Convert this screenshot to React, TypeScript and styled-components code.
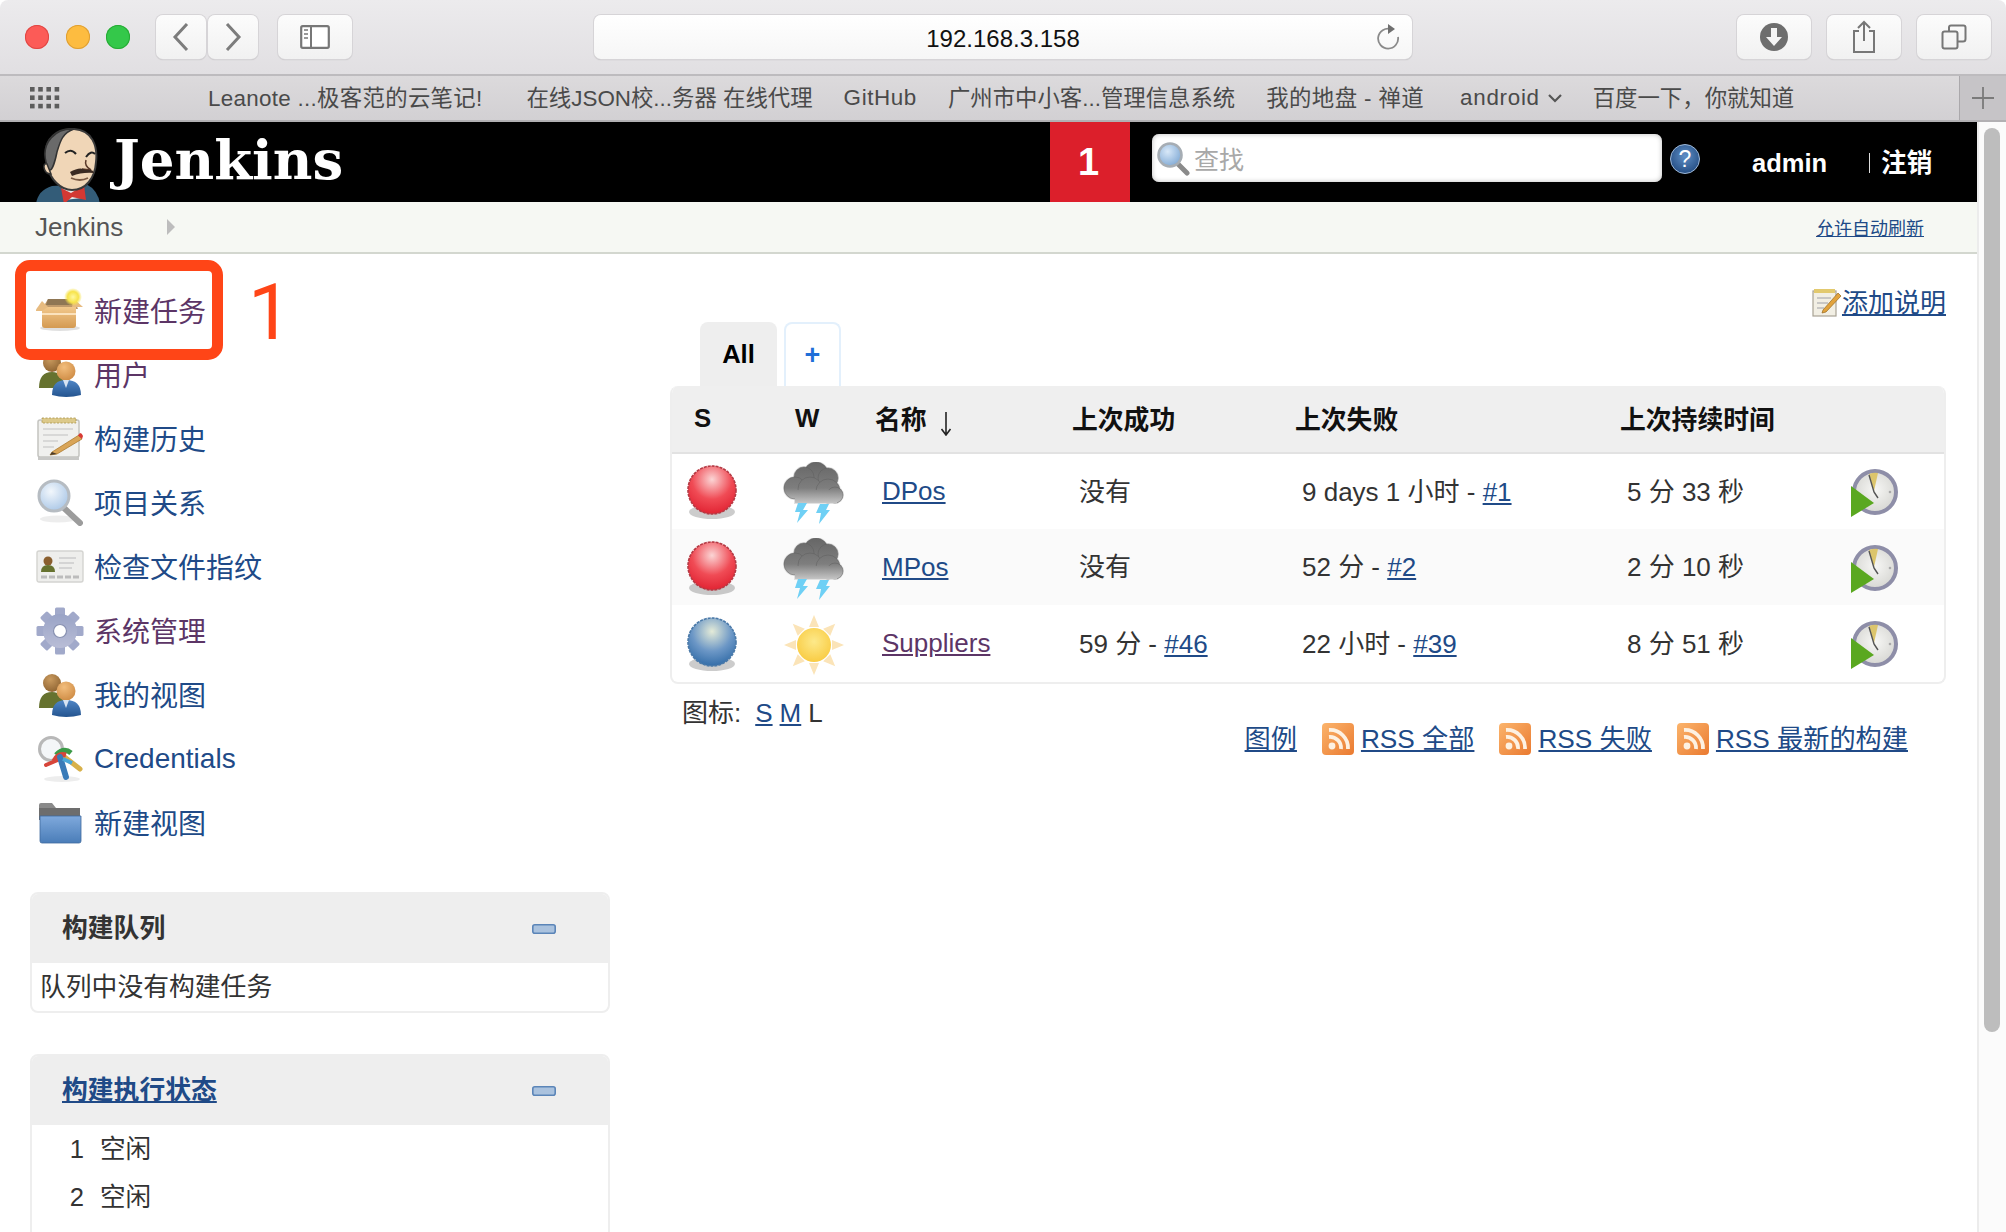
import styled, { createGlobalStyle } from "styled-components";

const GlobalStyle = createGlobalStyle`
  html, body {
    margin: 0;
    padding: 0;
    height: 100%;
    overflow: hidden;
    background: #fff;
  }
  body {
    font-family: "Liberation Sans", "Noto Sans CJK SC", sans-serif;
    font-size: 26px;
    color: #333;
  }
  a {
    color: #204a87;
  }
`;

const BLUE = "#204a87";
const PURPLE = "#5c3566";

/* ---------- icons ---------- */

function BackIcon() {
  return (
    <svg width="18" height="30" viewBox="0 0 18 30">
      <path d="M15 2 L3 15 L15 28" fill="none" stroke="#7c7c7c" strokeWidth="3" />
    </svg>
  );
}

function ForwardIcon() {
  return (
    <svg width="18" height="30" viewBox="0 0 18 30">
      <path d="M3 2 L15 15 L3 28" fill="none" stroke="#7c7c7c" strokeWidth="3" />
    </svg>
  );
}

function SidebarIcon() {
  return (
    <svg width="30" height="24" viewBox="0 0 30 24">
      <rect x="1.2" y="1.2" width="27.6" height="21.6" rx="1.5" fill="#fff" stroke="#777" strokeWidth="2.2" />
      <path d="M11 1 V23" stroke="#777" strokeWidth="2" />
      <path d="M4 5 H8 M4 9 H8 M4 13 H8" stroke="#999" strokeWidth="2" />
    </svg>
  );
}

function ReloadIcon() {
  return (
    <svg width="24" height="28" viewBox="0 0 24 28">
      <path d="M14 5 A10 10 0 1 0 21 13" fill="none" stroke="#8a8a8a" strokeWidth="1.8" />
      <path d="M11 0 L18 5 L11 10 Z" fill="#6f6f6f" />
    </svg>
  );
}

function DownloadIcon() {
  return (
    <svg width="30" height="30" viewBox="0 0 30 30">
      <circle cx="15" cy="15" r="14" fill="#6e6e6e" />
      <path d="M12 6 H18 V15 H23 L15 24 L7 15 H12 Z" fill="#f4f4f4" />
    </svg>
  );
}

function ShareIcon() {
  return (
    <svg width="24" height="34" viewBox="0 0 24 34">
      <path d="M7 11 H2 V32 H22 V11 H17" fill="none" stroke="#777" strokeWidth="2" />
      <path d="M12 2 V21 M6 8 L12 2 L18 8" fill="none" stroke="#777" strokeWidth="2" />
    </svg>
  );
}

function TabsIcon() {
  return (
    <svg width="26" height="26" viewBox="0 0 26 26">
      <rect x="1.5" y="7.5" width="15" height="17" rx="2" fill="none" stroke="#777" strokeWidth="2" />
      <path d="M8 7 V3.5 Q8 1.5 10 1.5 H22.5 Q24.5 1.5 24.5 3.5 V15 Q24.5 17.5 22 17.5 H17" fill="none" stroke="#777" strokeWidth="2" />
    </svg>
  );
}

function AppsIcon() {
  const dots = [];
  for (let r = 0; r < 3; r++) {
    for (let c = 0; c < 4; c++) {
      dots.push(<rect key={`${r}-${c}`} x={c * 8.2} y={r * 8.4} width="4.6" height="4.6" fill="#5c5c5c" />);
    }
  }
  return (
    <svg width="30" height="22" viewBox="0 0 30 22">
      {dots}
    </svg>
  );
}

function Mascot() {
  return (
    <svg width="68" height="76" viewBox="0 0 68 76">
      <path d="M0 76 Q2 62 16 58 L50 56 Q62 62 64 76 Z" fill="#335c78" />
      <path d="M26 58 L44 56 L46 70 L28 72 Z" fill="#e8e8e8" />
      <path d="M25 60 L35 65 L48 57 L50 72 L36 69 L28 76 Z" fill="#d33833" />
      <path d="M10 30 C7 10 22 0 38 1 C56 2 62 18 60 34 C59 50 50 62 36 62 C24 62 14 50 12 40 Z" fill="#f0d6b7" stroke="#3a3a3a" strokeWidth="2" />
      <path d="M10 34 C5 14 20 0 38 1 C26 5 24 14 21 24 C19 34 16 42 14 42 C11 42 11 38 10 34 Z" fill="#6a6a6a" stroke="#333" strokeWidth="1.5" />
      <path d="M11 36 C6 34 7 46 15 46 Z" fill="#f0d6b7" stroke="#333" strokeWidth="1.5" />
      <path d="M29 25 Q35 20 40 26 M50 29 Q55 22 59 26" fill="none" stroke="#222" strokeWidth="2" />
      <path d="M50 32 Q48 38 55 42 L46 41" fill="none" stroke="#5a3a2a" strokeWidth="1.5" />
      <path d="M34 44 Q44 38 50 42 Q57 41 58 45 Q46 44 36 48 Z" fill="#3a2a22" />
      <path d="M35 50 Q44 54 52 50" fill="none" stroke="#7a5a44" strokeWidth="1.8" />
    </svg>
  );
}

function NewItemIcon() {
  return (
    <svg width="48" height="48" viewBox="0 0 48 48">
      <defs>
        <linearGradient id="boxFront" x1="0" y1="0" x2="0" y2="1">
          <stop offset="0" stopColor="#f2c88c" />
          <stop offset="1" stopColor="#d49a52" />
        </linearGradient>
        <radialGradient id="starGlow">
          <stop offset="0" stopColor="#fff8a0" />
          <stop offset="0.6" stopColor="#f7e34a" />
          <stop offset="1" stopColor="#f7e34a" stopOpacity="0" />
        </radialGradient>
      </defs>
      <ellipse cx="24" cy="41" rx="20" ry="3" fill="#000" opacity="0.12" />
      <path d="M6 22 L12 12 L38 12 L42 22 Z" fill="#bf9a6c" />
      <path d="M12 12 L34 12 L36 18 L10 18 Z" fill="#8f7654" />
      <path d="M6 20 H40 V38 Q40 41 37 41 H9 Q6 41 6 38 Z" fill="url(#boxFront)" />
      <path d="M-1 24 L6 14 L12 20 L6 24 Z" fill="#e7bb80" />
      <path d="M47 20 L38 12 L36 20 Z" fill="#e7bb80" />
      <path d="M6 27 H40" stroke="#fbe2bd" strokeWidth="2" />
      <circle cx="37" cy="10" r="9" fill="url(#starGlow)" />
    </svg>
  );
}

function PeopleIcon() {
  return (
    <svg width="48" height="48" viewBox="0 0 48 48">
      <defs>
        <radialGradient id="headBack" cx="0.4" cy="0.3" r="0.8">
          <stop offset="0" stopColor="#c99a5e" />
          <stop offset="1" stopColor="#8a5f2e" />
        </radialGradient>
        <radialGradient id="headFront" cx="0.4" cy="0.3" r="0.8">
          <stop offset="0" stopColor="#f2bd7c" />
          <stop offset="1" stopColor="#cc8840" />
        </radialGradient>
        <linearGradient id="bodyFront" x1="0" y1="0" x2="0" y2="1">
          <stop offset="0" stopColor="#4f86c6" />
          <stop offset="1" stopColor="#24548f" />
        </linearGradient>
      </defs>
      <circle cx="16" cy="12" r="9" fill="url(#headBack)" />
      <path d="M3 37 Q3 21 16 21 Q28 21 28 37 Z" fill="#66722f" />
      <circle cx="30" cy="20" r="9.5" fill="url(#headFront)" />
      <path d="M16 44 Q16 29 30 29 Q45 29 45 44 Q30 48 16 44 Z" fill="url(#bodyFront)" />
      <path d="M27 29 L30 37 L33 29 Z" fill="#d8e4f2" />
    </svg>
  );
}

function HistoryIcon() {
  return (
    <svg width="48" height="48" viewBox="0 0 48 48">
      <rect x="2" y="5" width="41" height="37" rx="2" fill="#f0f0ee" stroke="#c4c4c0" strokeWidth="1.5" />
      <rect x="2" y="42" width="41" height="3" fill="#c8c8c6" />
      <rect x="6" y="3" width="34" height="5" fill="#dcc98a" stroke="#a8944c" strokeWidth="0.8" strokeDasharray="2 1.5" />
      <path d="M7 14 H37 M7 20 H32 M7 26 H22 M7 32 H18" stroke="#cfcfcf" strokeWidth="1.6" />
      <path d="M16 37 L43 20 L46 24 L21 39 L14 40 Z" fill="#d9a558" stroke="#a87222" strokeWidth="0.7" />
      <path d="M42 20.5 L44 18 Q46 18 47 21 L46 24 Z" fill="#d83a34" />
      <path d="M14 40 L16 37 L21 39 Z" fill="#4a3a2a" />
    </svg>
  );
}

function SearchBigIcon() {
  return (
    <svg width="48" height="48" viewBox="0 0 48 48">
      <defs>
        <radialGradient id="lens" cx="0.4" cy="0.35" r="0.7">
          <stop offset="0" stopColor="#f2f7fc" />
          <stop offset="1" stopColor="#a9c6e6" />
        </radialGradient>
      </defs>
      <ellipse cx="22" cy="40" rx="18" ry="3.5" fill="#000" opacity="0.07" />
      <path d="M28 29 L44 44" stroke="#9c9c9c" strokeWidth="6" strokeLinecap="round" />
      <circle cx="18" cy="17" r="15" fill="url(#lens)" stroke="#b6bcc2" strokeWidth="3" />
    </svg>
  );
}

function FingerprintIcon() {
  return (
    <svg width="48" height="48" viewBox="0 0 48 48">
      <rect x="1" y="8" width="46" height="31" rx="2" fill="#eeeeec" stroke="#d4d4d1" strokeWidth="1.4" />
      <circle cx="12" cy="18" r="4.5" fill="#8a5f2e" />
      <path d="M5 29 Q5 22 12 22 Q19 22 19 29 Z" fill="#66722f" />
      <path d="M23 15 H40 M23 20 H38 M23 25 H36" stroke="#d4d4d4" strokeWidth="2" />
      <path d="M5 34 H43" stroke="#bcbcbc" strokeWidth="3" strokeDasharray="6 2" />
    </svg>
  );
}

function GearIcon() {
  const teeth = [0, 45, 90, 135, 180, 225, 270, 315];
  return (
    <svg width="48" height="48" viewBox="0 0 48 48">
      <defs>
        <linearGradient id="gearFill" x1="0" y1="0" x2="0" y2="1">
          <stop offset="0" stopColor="#99a3c6" />
          <stop offset="1" stopColor="#b9bdd6" />
        </linearGradient>
      </defs>
      {teeth.map((a) => (
        <rect key={a} x="19" y="0.5" width="10" height="12" rx="1.5" fill="#a1a9ca" transform={`rotate(${a} 24 24)`} />
      ))}
      <circle cx="24" cy="24" r="17" fill="url(#gearFill)" />
      <circle cx="24" cy="24" r="6.5" fill="#fff" stroke="#8790b0" strokeWidth="1.2" />
    </svg>
  );
}

function CredentialsIcon() {
  return (
    <svg width="48" height="48" viewBox="0 0 48 48">
      <ellipse cx="26" cy="44" rx="18" ry="3" fill="#000" opacity="0.07" />
      <circle cx="15" cy="14" r="11.5" fill="#f4f6f8" stroke="#b8b8b8" strokeWidth="3" />
      <path d="M26 20 L44 34" stroke="#d8b14a" strokeWidth="5" strokeLinecap="round" />
      <path d="M20 20 Q28 12 35 18" fill="none" stroke="#3b9a47" strokeWidth="5" />
      <path d="M18 26 Q22 18 30 20" fill="none" stroke="#d7453a" strokeWidth="5" />
      <path d="M10 30 L24 24" stroke="#d7453a" strokeWidth="4" strokeLinecap="round" />
      <path d="M24 22 L30 42" stroke="#3a7bb8" strokeWidth="6" strokeLinecap="round" />
      <path d="M27 24 L36 28" stroke="#49a7d8" strokeWidth="4" />
    </svg>
  );
}

function FolderIcon() {
  return (
    <svg width="48" height="48" viewBox="0 0 48 48">
      <defs>
        <linearGradient id="folderFront" x1="0" y1="0" x2="0" y2="1">
          <stop offset="0" stopColor="#7fa9dc" />
          <stop offset="1" stopColor="#4a7db8" />
        </linearGradient>
      </defs>
      <path d="M3 6 Q3 4 5 4 H16 L20 9 H42 Q44 9 44 11 V20 H3 Z" fill="#8a8a8a" />
      <rect x="3" y="9" width="41" height="12" fill="#6d6d6d" />
      <path d="M4 17 H45 V42 Q45 44 43 44 H6 Q4 44 4 42 Z" fill="url(#folderFront)" stroke="#3f6a9e" strokeWidth="0.8" />
    </svg>
  );
}

function Ball({ blue }: { blue?: boolean }) {
  const id = blue ? "ballBlue" : "ballRed";
  const [hi, mid, edge] = blue ? ["#e4ebd8", "#6c97c6", "#2f6aa6"] : ["#fbd5d5", "#f04b55", "#e02030"];
  return (
    <svg width="52" height="56" viewBox="0 0 52 56">
      <defs>
        <radialGradient id={id} cx="0.5" cy="0.28" r="0.75">
          <stop offset="0" stopColor={hi} />
          <stop offset="0.55" stopColor={mid} />
          <stop offset="1" stopColor={edge} />
        </radialGradient>
      </defs>
      <ellipse cx="26" cy="47" rx="23" ry="7" fill="#000" opacity="0.2" />
      <circle cx="26" cy="25" r="24" fill={`url(#${id})`} stroke={blue ? "#4a79a8" : "#b43a44"} strokeWidth="1.6" strokeDasharray="3 1" />
    </svg>
  );
}

function StormIcon() {
  const lobes = [
    [33, 12, 12],
    [21, 15, 10],
    [45, 16, 10],
    [12, 26, 11],
    [27, 27, 12],
    [45, 29, 12],
    [52, 33, 8],
  ];
  return (
    <svg width="62" height="62" viewBox="0 0 62 62">
      <defs>
        <linearGradient id="cloudFill" gradientUnits="userSpaceOnUse" x1="0" y1="0" x2="0" y2="42">
          <stop offset="0" stopColor="#666666" />
          <stop offset="0.62" stopColor="#7e7e7e" />
          <stop offset="1" stopColor="#c9c9c9" />
        </linearGradient>
      </defs>
      {lobes.map(([x, y, r]) => (
        <circle key={`h${x}`} cx={x} cy={y} r={r + 1} fill="#e2e2e2" />
      ))}
      <rect x="11" y="28" width="44" height="14" fill="#e2e2e2" />
      {lobes.map(([x, y, r]) => (
        <circle key={x} cx={x} cy={y} r={r} fill="url(#cloudFill)" stroke="#5f5f5f" strokeWidth="0.5" />
      ))}
      <rect x="12" y="28" width="42" height="13" fill="url(#cloudFill)" />
      <path d="M15 41 H24 L20 48 H25 L14 61 L17 50 H12 Z" fill="#6fd0f5" />
      <path d="M37 42 H46 L43 48 H47 L36 62 L38 51 H33 Z" fill="#6fd0f5" />
    </svg>
  );
}

function SunIcon() {
  const rays = [0, 45, 90, 135, 180, 225, 270, 315];
  return (
    <svg width="62" height="62" viewBox="0 0 62 62">
      <defs>
        <radialGradient id="sunFill" cx="0.5" cy="0.4" r="0.6">
          <stop offset="0" stopColor="#fde98a" />
          <stop offset="1" stopColor="#f9cc44" />
        </radialGradient>
      </defs>
      {rays.map((a) => (
        <path key={a} d="M31 1 L36 13 H26 Z" fill="#fbe4b8" transform={`rotate(${a} 31 31)`} />
      ))}
      <circle cx="31" cy="31" r="17" fill="url(#sunFill)" />
    </svg>
  );
}

function ClockIcon() {
  return (
    <svg width="48" height="50" viewBox="0 0 48 50">
      <defs>
        <radialGradient id="clockFace" cx="0.5" cy="0.45" r="0.6">
          <stop offset="0" stopColor="#f7f7f5" />
          <stop offset="1" stopColor="#d4d4d0" />
        </radialGradient>
      </defs>
      <circle cx="25" cy="24" r="21" fill="url(#clockFace)" stroke="#8e8ea8" strokeWidth="4" />
      <path d="M24 23 L19 6 Q24 4 28 5 Z" fill="#dcc56c" />
      <path d="M24 24 L19 7 M24 24 L28 30" stroke="#555" strokeWidth="1.4" />
      <circle cx="40" cy="24" r="1.3" fill="#aaa" />
      <path d="M1 18 L24 35 L1 49 Z" fill="#5aa820" />
    </svg>
  );
}

function RssIcon() {
  return (
    <svg width="32" height="32" viewBox="0 0 32 32">
      <defs>
        <linearGradient id="rssFill" x1="0" y1="0" x2="1" y2="1">
          <stop offset="0" stopColor="#fbb46c" />
          <stop offset="1" stopColor="#ea7a30" />
        </linearGradient>
      </defs>
      <rect width="32" height="32" rx="4" fill="url(#rssFill)" />
      <circle cx="10" cy="23" r="3.4" fill="#fdf1e2" />
      <path d="M7 14 A11 11 0 0 1 19 26 M7 7 A18 18 0 0 1 26 26" fill="none" stroke="#fdf1e2" strokeWidth="3.8" />
    </svg>
  );
}

function NoteIcon() {
  return (
    <svg width="30" height="30" viewBox="0 0 30 30">
      <rect x="1" y="4" width="23" height="25" fill="#f2efe4" stroke="#a8a294" strokeWidth="1.2" />
      <rect x="2" y="2" width="21" height="4" fill="#e2c96e" />
      <path d="M5 11 H19 M5 16 H16 M5 21 H12" stroke="#bbb" strokeWidth="1.4" />
      <path d="M11 23 L26 6 L29 9 L14 25 L10 26 Z" fill="#e2a33d" stroke="#96681e" strokeWidth="0.7" />
    </svg>
  );
}

function SmallSearchIcon() {
  return (
    <svg width="34" height="36" viewBox="0 0 34 36">
      <defs>
        <radialGradient id="lensSmall" cx="0.4" cy="0.35" r="0.7">
          <stop offset="0" stopColor="#d8e8f8" />
          <stop offset="1" stopColor="#7ea8d4" />
        </radialGradient>
      </defs>
      <path d="M21 23 L31 33" stroke="#8a8a8a" strokeWidth="5" strokeLinecap="round" />
      <circle cx="14" cy="15" r="11.5" fill="url(#lensSmall)" stroke="#a6adb4" strokeWidth="2.6" />
    </svg>
  );
}

function HelpIcon() {
  return (
    <svg width="30" height="32" viewBox="0 0 30 32">
      <defs>
        <radialGradient id="helpFill" cx="0.5" cy="0.4" r="0.65">
          <stop offset="0" stopColor="#5f8fc6" />
          <stop offset="1" stopColor="#21497f" />
        </radialGradient>
      </defs>
      <circle cx="15" cy="16" r="14.5" fill="url(#helpFill)" stroke="#9fb9d8" strokeWidth="1" />
      <text x="15" y="24" textAnchor="middle" fontSize="23" fontWeight="400" fill="#fff" fontFamily="Liberation Sans">
        ?
      </text>
    </svg>
  );
}

function CollapseIcon() {
  return (
    <svg width="24" height="10" viewBox="0 0 24 10">
      <rect x="0.8" y="0.8" width="22.4" height="8.4" rx="2" fill="#aac2de" stroke="#5b85b8" strokeWidth="1.6" />
    </svg>
  );
}

function SortDownIcon() {
  return (
    <svg width="12" height="24" viewBox="0 0 12 24">
      <path d="M6 0 V23 M1.5 17 L6 23 L10.5 17" fill="none" stroke="#222" strokeWidth="1.6" />
    </svg>
  );
}

/* ---------- data ---------- */

const bookmarks = [
  { label: "Leanote ...极客范的云笔记!", margin: 0, spacing: 0.3 },
  { label: "在线JSON校...务器 在线代理", margin: 44 },
  { label: "GitHub", margin: 31, spacing: 0.6, latin: true },
  { label: "广州市中小客...管理信息系统", margin: 31 },
  { label: "我的地盘 - 禅道", margin: 31, spacing: 0.4 },
  { label: "android", margin: 36, spacing: 0.7, latin: true, more: true },
  { label: "百度一下，你就知道", margin: 30 },
];

const tasks = [
  { label: "新建任务", icon: <NewItemIcon />, visited: true },
  { label: "用户", icon: <PeopleIcon />, visited: true },
  { label: "构建历史", icon: <HistoryIcon /> },
  { label: "项目关系", icon: <SearchBigIcon /> },
  { label: "检查文件指纹", icon: <FingerprintIcon /> },
  { label: "系统管理", icon: <GearIcon />, visited: true },
  { label: "我的视图", icon: <PeopleIcon /> },
  { label: "Credentials", icon: <CredentialsIcon />, latin: true },
  { label: "新建视图", icon: <FolderIcon /> },
];

const jobs = [
  { name: "DPos", red: true, success: "没有", fail: "9 days 1 小时 - ", failRun: "#1", time: "5 分 33 秒" },
  { name: "MPos", red: true, success: "没有", fail: "52 分 - ", failRun: "#2", time: "2 分 10 秒" },
  {
    name: "Suppliers",
    red: false,
    visited: true,
    success: "59 分 - ",
    successRun: "#46",
    fail: "22 小时 - ",
    failRun: "#39",
    time: "8 分 51 秒",
  },
];

/* ---------- component ---------- */

function App() {
  return (
    <Window>
      <GlobalStyle />
      <Toolbar>
        <Lights>
          <Light $color="#fc5b57" $edge="#df4744" />
          <Light $color="#fdbc40" $edge="#de9f34" />
          <Light $color="#34c84a" $edge="#27aa35" />
        </Lights>
        <NavGroup>
          <ChromeButton $w={50}>
            <BackIcon />
          </ChromeButton>
          <ChromeButton $w={50}>
            <ForwardIcon />
          </ChromeButton>
        </NavGroup>
        <ChromeButton $w={74} $ml={20}>
          <SidebarIcon />
        </ChromeButton>
        <AddressBar>
          192.168.3.158
          <ReloadSlot>
            <ReloadIcon />
          </ReloadSlot>
        </AddressBar>
        <ChromeButton $w={74} $ml={325}>
          <DownloadIcon />
        </ChromeButton>
        <ChromeButton $w={74} $ml={16}>
          <ShareIcon />
        </ChromeButton>
        <ChromeButton $w={74} $ml={16}>
          <TabsIcon />
        </ChromeButton>
      </Toolbar>

      <BookmarkBar>
        <AppsSlot>
          <AppsIcon />
        </AppsSlot>
        {bookmarks.map((b) => (
          <Bookmark key={b.label} $ml={b.margin} $spacing={b.spacing} $latin={b.latin}>
            {b.label}
            {b.more && (
              <svg width="16" height="10" viewBox="0 0 16 10">
                <path d="M2 2 L8 8 L14 2" fill="none" stroke="#555" strokeWidth="2.2" />
              </svg>
            )}
          </Bookmark>
        ))}
        <NewTab>
          <svg width="22" height="22" viewBox="0 0 22 22">
            <path d="M11 0 V22 M0 11 H22" stroke="#7a7a7a" strokeWidth="1.8" />
          </svg>
        </NewTab>
      </BookmarkBar>

      <Viewport>
        <Page>
          <Header>
            <LogoSlot>
              <Mascot />
            </LogoSlot>
            <LogoText>Jenkins</LogoText>
            <Badge>1</Badge>
            <SearchBox>
              <SmallSearchIcon />
              <SearchHint>查找</SearchHint>
            </SearchBox>
            <HelpSlot>
              <HelpIcon />
            </HelpSlot>
            <UserName>admin</UserName>
            <Logout>注销</Logout>
          </Header>

          <Breadcrumbs>
            <Crumb>Jenkins</Crumb>
            <CrumbArrow />
            <AutoRefresh href="#">允许自动刷新</AutoRefresh>
          </Breadcrumbs>

          <Columns>
            <Sidebar>
              <TaskList>
                {tasks.map((t) => (
                  <Task key={t.label}>
                    <TaskIcon>{t.icon}</TaskIcon>
                    <TaskLabel $visited={t.visited} $latin={t.latin}>
                      {t.label}
                    </TaskLabel>
                  </Task>
                ))}
              </TaskList>

              <Pane>
                <PaneHeader>
                  <PaneTitle>构建队列</PaneTitle>
                  <CollapseIcon />
                </PaneHeader>
                <QueueBody>队列中没有构建任务</QueueBody>
              </Pane>

              <Pane>
                <PaneHeader>
                  <PaneTitle>
                    <a href="#">构建执行状态</a>
                  </PaneTitle>
                  <CollapseIcon />
                </PaneHeader>
                <ExecutorRow>
                  <ExecutorNo>1</ExecutorNo>空闲
                </ExecutorRow>
                <ExecutorRow>
                  <ExecutorNo>2</ExecutorNo>空闲
                </ExecutorRow>
                <ExecutorRow />
              </Pane>
            </Sidebar>

            <Main>
              <DescriptionRow>
                <NoteIcon />
                <a href="#">添加说明</a>
              </DescriptionRow>

              <Tabs>
                <ActiveTab>All</ActiveTab>
                <AddTab>+</AddTab>
              </Tabs>

              <TableWrap>
                <JobTable>
                  <colgroup>
                    <col width="103" />
                    <col width="100" />
                    <col width="197" />
                    <col width="223" />
                    <col width="325" />
                    <col width="223" />
                    <col />
                  </colgroup>
                  <thead>
                    <tr>
                      <HeadCell $pl={22} $latin>
                        S
                      </HeadCell>
                      <HeadCell $pl={20} $latin>
                        W
                      </HeadCell>
                      <HeadCell>
                        名称
                        <SortArrow>
                          <SortDownIcon />
                        </SortArrow>
                      </HeadCell>
                      <HeadCell>上次成功</HeadCell>
                      <HeadCell>上次失败</HeadCell>
                      <HeadCell>上次持续时间</HeadCell>
                      <HeadCell />
                    </tr>
                  </thead>
                  <tbody>
                    {jobs.map((j) => (
                      <JobRow key={j.name}>
                        <IconCell $pl={14}>
                          <Ball blue={!j.red} />
                        </IconCell>
                        <IconCell $pl={8}>{j.red ? <StormIcon /> : <SunIcon />}</IconCell>
                        <NameCell>
                          <JobLink href="#" $visited={j.visited}>
                            {j.name}
                          </JobLink>
                        </NameCell>
                        <TextCell>
                          {j.success}
                          {j.successRun && <a href="#">{j.successRun}</a>}
                        </TextCell>
                        <TextCell>
                          {j.fail}
                          <a href="#">{j.failRun}</a>
                        </TextCell>
                        <TextCell>{j.time}</TextCell>
                        <IconCell $pl={7}>
                          <ClockIcon />
                        </IconCell>
                      </JobRow>
                    ))}
                  </tbody>
                </JobTable>
              </TableWrap>

              <IconSizes>
                图标:
                <a href="#">S</a>
                <a href="#">M</a>
                <span>L</span>
              </IconSizes>

              <RssRow>
                <a href="#">图例</a>
                <RssLink>
                  <RssIcon />
                  <a href="#">RSS 全部</a>
                </RssLink>
                <RssLink>
                  <RssIcon />
                  <a href="#">RSS 失败</a>
                </RssLink>
                <RssLink>
                  <RssIcon />
                  <a href="#">RSS 最新的构建</a>
                </RssLink>
              </RssRow>
            </Main>
          </Columns>
        </Page>
        <ScrollTrack>
          <ScrollThumb />
        </ScrollTrack>
      </Viewport>

      <RedFrame />
      <RedNumber>1</RedNumber>
    </Window>
  );
}

const Window = styled.div`
  position: relative;
  width: 2006px;
  height: 1232px;
  overflow: hidden;
  display: flex;
  flex-direction: column;
  border-radius: 8px 8px 0 0;
`;

const Toolbar = styled.div`
  height: 74px;
  flex: none;
  display: flex;
  align-items: center;
  padding: 0 15px 0 0;
  background: linear-gradient(#ecebed, #e1dfe2);
  border-bottom: 2px solid #bdbbbe;
`;

const Lights = styled.div`
  display: flex;
  gap: 16.5px;
  margin-left: 25px;
  width: 131px;
`;

const Light = styled.span<{ $color: string; $edge: string }>`
  width: 24px;
  height: 24px;
  border-radius: 50%;
  background: ${(p) => p.$color};
  box-shadow: inset 0 0 0 1px ${(p) => p.$edge};
`;

const NavGroup = styled.div`
  display: flex;
  gap: 2px;
`;

const ChromeButton = styled.div<{ $w: number; $ml?: number }>`
  width: ${(p) => p.$w}px;
  height: 44px;
  margin-left: ${(p) => p.$ml ?? 0}px;
  flex: none;
  display: flex;
  align-items: center;
  justify-content: center;
  box-sizing: border-box;
  border-radius: 7px;
  background: linear-gradient(#fcfcfc, #f1f1f1);
  box-shadow: 0 0 0 1px #d6d4d7, 0 1px 1px #b5b3b6;
`;

const AddressBar = styled.div`
  position: relative;
  width: 818px;
  height: 44px;
  margin-left: 242px;
  flex: none;
  display: flex;
  align-items: center;
  justify-content: center;
  box-sizing: border-box;
  padding-top: 4px;
  border-radius: 7px;
  background: linear-gradient(#ffffff, #f6f6f6);
  box-shadow: 0 0 0 1px #d6d4d7, 0 1px 1px #a9a7aa;
  font-size: 24px;
  color: #111;
`;

const ReloadSlot = styled.div`
  position: absolute;
  right: 11px;
  top: 9px;
  display: flex;
`;

const BookmarkBar = styled.div`
  height: 44px;
  flex: none;
  display: flex;
  align-items: center;
  background: linear-gradient(#dcdadc, #d2d0d3);
  border-bottom: 2px solid #b2b0b3;
  font-size: 22.4px;
  color: #4a4a4a;
  white-space: nowrap;
`;

const AppsSlot = styled.div`
  width: 208px;
  padding-left: 30px;
  box-sizing: border-box;
  display: flex;
  flex: none;
`;

const Bookmark = styled.span<{ $ml: number; $spacing?: number; $latin?: boolean }>`
  margin-left: ${(p) => p.$ml}px;
  padding-bottom: ${(p) => (p.$latin ? 0 : 4)}px;
  letter-spacing: ${(p) => p.$spacing ?? 0}px;
  display: flex;
  align-items: center;
  gap: 7px;
`;

const NewTab = styled.div`
  margin-left: auto;
  width: 47px;
  height: 44px;
  display: flex;
  align-items: center;
  justify-content: center;
  background: #c6c4c7;
  box-shadow: inset 1px 0 0 #aaa8ab;
`;

const Viewport = styled.div`
  flex: 1;
  display: flex;
  min-height: 0;
`;

const Page = styled.div`
  width: 1977px;
  flex: none;
  display: flex;
  flex-direction: column;
`;

const ScrollTrack = styled.div`
  flex: 1;
  background: #fbfbfb;
  border-left: 2px solid #ececec;
  padding: 6px 6px 0 5px;
`;

const ScrollThumb = styled.div`
  height: 904px;
  border-radius: 9px;
  background: #bdbdbd;
`;

const Header = styled.header`
  height: 80px;
  flex: none;
  display: flex;
  align-items: center;
  background: #000;
  overflow: hidden;
`;

const LogoSlot = styled.div`
  margin: 6px 0 0 36px;
  width: 78px;
  height: 74px;
  flex: none;
  filter: blur(0.5px);
`;

const LogoText = styled.div`
  font-family: "DejaVu Serif", "Liberation Serif", serif;
  font-weight: 700;
  font-size: 54.6px;
  color: #fff;
  width: 936px;
  line-height: 80px;
  flex: none;
  margin-top: -4px;
`;

const Badge = styled.div`
  width: 80px;
  height: 80px;
  flex: none;
  box-sizing: border-box;
  padding-right: 3px;
  background: #dc1f2b;
  color: #fff;
  font-weight: 700;
  font-size: 38px;
  display: flex;
  align-items: center;
  justify-content: center;
`;

const SearchBox = styled.div`
  width: 510px;
  height: 48px;
  margin: -8px 0 0 22px;
  flex: none;
  display: flex;
  align-items: center;
  gap: 4px;
  padding-left: 4px;
  box-sizing: border-box;
  background: #fff;
  border-radius: 7px;
  box-shadow: inset 0 0 5px #bbb;
`;

const SearchHint = styled.span`
  font-size: 25px;
  color: #a8a8a8;
`;

const HelpSlot = styled.div`
  margin: -6px 0 0 8px;
  display: flex;
  flex: none;
`;

const UserName = styled.span`
  margin: 2px 0 0 52px;
  font-weight: 700;
  font-size: 25.5px;
  color: #fff;
`;

const Logout = styled.span`
  margin: 2px 0 0 42px;
  padding-left: 11px;
  border-left: 1.5px solid #ddd;
  line-height: 20px;
  height: 20px;
  display: flex;
  align-items: center;
  font-weight: 700;
  font-size: 25.6px;
  color: #fff;
`;

const Breadcrumbs = styled.nav`
  height: 50px;
  flex: none;
  display: flex;
  align-items: center;
  padding: 0 53px 0 35px;
  background: #f6f8f3;
  border-bottom: 2px solid #d3d7cf;
`;

const Crumb = styled.span`
  font-size: 26px;
  color: #555;
`;

const CrumbArrow = styled.span`
  margin-left: 44px;
  width: 0;
  height: 0;
  border-left: 8px solid #bdbdbd;
  border-top: 8px solid transparent;
  border-bottom: 8px solid transparent;
`;

const AutoRefresh = styled.a`
  margin-left: auto;
  font-size: 18px;
`;

const Columns = styled.div`
  flex: 1;
  display: flex;
  min-height: 0;
`;

const Sidebar = styled.aside`
  width: 640px;
  flex: none;
  box-sizing: border-box;
  padding: 25px 30px 0;
`;

const TaskList = styled.div`
  display: flex;
  flex-direction: column;
  margin-bottom: 37px;
`;

const Task = styled.div`
  height: 64px;
  display: flex;
  align-items: center;
  gap: 10px;
  padding-left: 6px;
`;

const TaskIcon = styled.span`
  width: 48px;
  height: 48px;
  display: flex;
  flex: none;
  filter: blur(0.6px);
`;

const TaskLabel = styled.span<{ $visited?: boolean; $latin?: boolean }>`
  font-size: 28px;
  padding-bottom: ${(p) => (p.$latin ? 0 : 3)}px;
  color: ${(p) => (p.$visited ? PURPLE : BLUE)};
`;

const Pane = styled.section`
  border: 2px solid #eeeeee;
  border-radius: 8px;
  margin-bottom: 41px;
  overflow: hidden;
`;

const PaneHeader = styled.div`
  height: 69px;
  display: flex;
  align-items: center;
  justify-content: space-between;
  padding: 0 52px 0 30px;
  background: #eeeeee;
`;

const PaneTitle = styled.div`
  font-weight: 700;
  font-size: 25.8px;
  color: #333;
  padding-bottom: 7px;
`;

const QueueBody = styled.div`
  height: 48px;
  line-height: 48px;
  padding-left: 8px;
  font-size: 25.8px;
`;

const ExecutorRow = styled.div`
  height: 48px;
  line-height: 48px;
  display: flex;
  font-size: 25.6px;
`;

const ExecutorNo = styled.span`
  width: 52px;
  margin-right: 16px;
  text-align: right;
`;

const Main = styled.main`
  flex: 1;
  box-sizing: border-box;
  padding: 0 31px 0 30px;
  display: flex;
  flex-direction: column;
`;

const DescriptionRow = styled.div`
  height: 68px;
  box-sizing: border-box;
  padding-top: 24px;
  flex: none;
  display: flex;
  justify-content: flex-end;
  align-items: center;
  font-size: 26px;
  gap: 0;
  svg {
    margin: 4px 0 0;
  }
`;

const Tabs = styled.div`
  display: flex;
  gap: 7px;
  height: 64px;
  flex: none;
  padding-left: 30px;
`;

const ActiveTab = styled.div`
  width: 77px;
  background: #eeeeee;
  border-radius: 8px 8px 0 0;
  display: flex;
  align-items: center;
  justify-content: center;
  font-weight: 700;
  font-size: 25.6px;
  color: #000;
  box-sizing: border-box;
`;

const AddTab = styled.div`
  width: 57px;
  box-sizing: border-box;
  border: 2px solid #e3f0fc;
  border-bottom: none;
  border-radius: 8px 8px 0 0;
  display: flex;
  align-items: center;
  justify-content: center;
  font-weight: 700;
  font-size: 27px;
  color: #1f6fd8;
`;

const TableWrap = styled.div`
  border: 2px solid #eeeeee;
  border-top: none;
  border-radius: 8px;
  overflow: hidden;
  flex: none;
`;

const JobTable = styled.table`
  width: 100%;
  table-layout: fixed;
  border-collapse: collapse;
`;

const HeadCell = styled.th<{ $pl?: number; $latin?: boolean }>`
  height: 67px;
  box-sizing: border-box;
  padding: 0 0 ${(p) => (p.$latin ? 2 : 4)}px ${(p) => p.$pl ?? 0}px;
  text-align: left;
  background: #efefef;
  border-bottom: 2px solid #e2e2e2;
  font-size: 25.8px;
  font-weight: 700;
  color: #111;
  white-space: nowrap;
`;

const SortArrow = styled.span`
  margin-left: 13px;
  display: inline-block;
  vertical-align: -7px;
  line-height: 0;
`;

const JobRow = styled.tr`
  height: 76px;
  &:nth-child(even) td {
    background: #fafafa;
  }
  &:last-child {
    height: 77px;
  }
`;

const IconCell = styled.td<{ $pl: number }>`
  padding: 3px 0 0 ${(p) => p.$pl}px;
  line-height: 0;
  vertical-align: middle;
  svg {
    filter: blur(0.5px);
  }
`;

const NameCell = styled.td`
  padding: 0 0 0 7px;
  font-size: 26px;
  vertical-align: middle;
  white-space: nowrap;
`;

const TextCell = styled(NameCell)`
  padding-bottom: 5px;
`;

const JobLink = styled.a<{ $visited?: boolean }>`
  color: ${(p) => (p.$visited ? PURPLE : BLUE)};
`;

const IconSizes = styled.div`
  height: 25px;
  line-height: 25px;
  margin-top: 17px;
  padding-left: 12px;
  font-size: 26px;
  display: flex;
  flex: none;
  a:first-of-type {
    margin-left: 14px;
  }
  a + a,
  span {
    margin-left: 7px;
  }
`;

const RssRow = styled.div`
  height: 32px;
  display: flex;
  justify-content: flex-end;
  align-items: center;
  gap: 25px;
  padding-right: 38px;
  font-size: 26.2px;
  margin-top: -3px;
  flex: none;
  a {
    padding-bottom: 4px;
  }
`;

const RssLink = styled.span`
  display: flex;
  align-items: center;
  gap: 7px;
`;

const RedFrame = styled.div`
  position: absolute;
  left: 15px;
  top: 260px;
  width: 208px;
  height: 100px;
  box-sizing: border-box;
  border: 11px solid #ff4517;
  border-radius: 15px;
`;

const RedNumber = styled.div`
  position: absolute;
  left: 248px;
  top: 265px;
  font-family: Roboto, "Liberation Sans", sans-serif;
  font-weight: 400;
  font-size: 78px;
  line-height: 96px;
  color: #ff4517;
`;

export default App;
